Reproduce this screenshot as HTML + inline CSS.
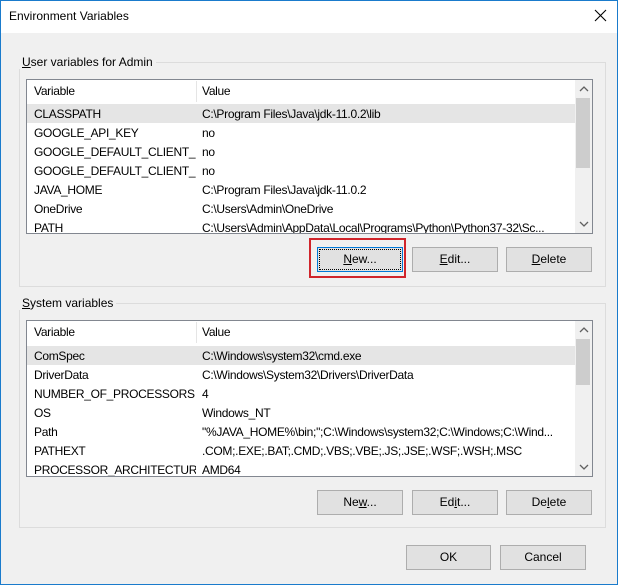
<!DOCTYPE html>
<html><head><style>
*{margin:0;padding:0;box-sizing:border-box}
body{width:618px;height:585px;overflow:hidden;background:#f0f0f0;font-family:"Liberation Sans",sans-serif;font-size:12px;color:#000;position:relative}
.a{position:absolute}
.win{left:0;top:0;width:618px;height:585px;border:1px solid #1a7bcc}
.title{left:1px;top:1px;width:616px;height:32px;background:#fff}
.grp{border:1px solid #dcdcdc}
.lbl{background:#f0f0f0;padding:0 3px}
.lv{background:#fff;border:1px solid #828790;overflow:hidden;letter-spacing:-0.3px}
.row{position:absolute;left:0;width:548px;height:19px;line-height:19px}
.row span{position:absolute;top:0;white-space:nowrap}
.c1{left:7px;width:162px;overflow:hidden}.c2{left:175px}
.sel{background:#e5e5e5}
.sb{background:#f0f0f0}
.btn{background:#e1e1e1;border:1px solid #adadad;text-align:center;line-height:22px}
u{text-decoration:underline}
.ar{font-size:13px;color:#606060;font-weight:bold}
</style></head><body>
<div class="a win"></div>
<div class="a title"></div>
<div class="a" style="left:9px;top:9px;font-size:12px">Environment Variables</div>
<svg class="a" style="left:594px;top:9px" width="13" height="13"><path d="M1 1L12 12M12 1L1 12" stroke="#000" stroke-width="1.1"/></svg>

<div class="a grp" style="left:19px;top:62px;width:587px;height:225px"></div>
<div class="a lbl" style="left:19px;top:55px"><u>U</u>ser variables for Admin</div>
<div class="a lv" style="left:26px;top:79px;width:567px;height:155px">
  <div class="row" style="top:1px;height:21px;line-height:21px"><span class="c1">Variable</span><span class="c2">Value</span></div>
  <div class="a" style="left:169px;top:1px;width:1px;height:21px;background:#e5e5e5"></div>
  <div class="row sel" style="top:24px;line-height:21px"><span class="c1">CLASSPATH</span><span class="c2">C:\Program Files\Java\jdk-11.0.2\lib</span></div>
  <div class="row" style="top:44px"><span class="c1">GOOGLE_API_KEY</span><span class="c2">no</span></div>
  <div class="row" style="top:63px"><span class="c1">GOOGLE_DEFAULT_CLIENT_ID</span><span class="c2">no</span></div>
  <div class="row" style="top:82px"><span class="c1">GOOGLE_DEFAULT_CLIENT_...</span><span class="c2">no</span></div>
  <div class="row" style="top:101px"><span class="c1">JAVA_HOME</span><span class="c2">C:\Program Files\Java\jdk-11.0.2</span></div>
  <div class="row" style="top:120px"><span class="c1">OneDrive</span><span class="c2">C:\Users\Admin\OneDrive</span></div>
  <div class="row" style="top:139px"><span class="c1">PATH</span><span class="c2">C:\Users\Admin\AppData\Local\Programs\Python\Python37-32\Sc...</span></div>
  <div class="a sb" style="left:548px;top:0;width:17px;height:153px"></div>
  <div class="a" style="left:549px;top:18px;width:14px;height:70px;background:#cdcdcd"></div>
  <svg class="a" style="left:552px;top:5px" width="10" height="8"><path d="M1 6L5 2L9 6" fill="none" stroke="#606060" stroke-width="1.3"/></svg>
  <svg class="a" style="left:552px;top:140px" width="10" height="8"><path d="M1 2L5 6L9 2" fill="none" stroke="#606060" stroke-width="1.3"/></svg>
</div>
<div class="a" style="left:309px;top:238px;width:97px;height:40px;border:2px solid #d0252b"></div>
<div class="a btn" style="left:317px;top:247px;width:86px;height:25px;border:1px solid #0078d7;outline:1px dotted #000;outline-offset:-3px"><u>N</u>ew...</div>
<div class="a btn" style="left:412px;top:247px;width:86px;height:25px"><u>E</u>dit...</div>
<div class="a btn" style="left:506px;top:247px;width:86px;height:25px"><u>D</u>elete</div>

<div class="a grp" style="left:19px;top:303px;width:587px;height:225px"></div>
<div class="a lbl" style="left:19px;top:296px"><u>S</u>ystem variables</div>
<div class="a lv" style="left:26px;top:320px;width:567px;height:157px">
  <div class="row" style="top:1px;height:21px;line-height:21px"><span class="c1">Variable</span><span class="c2">Value</span></div>
  <div class="a" style="left:169px;top:1px;width:1px;height:21px;background:#e5e5e5"></div>
  <div class="row sel" style="top:25px;line-height:20px"><span class="c1">ComSpec</span><span class="c2">C:\Windows\system32\cmd.exe</span></div>
  <div class="row" style="top:45px"><span class="c1">DriverData</span><span class="c2">C:\Windows\System32\Drivers\DriverData</span></div>
  <div class="row" style="top:64px"><span class="c1">NUMBER_OF_PROCESSORS</span><span class="c2">4</span></div>
  <div class="row" style="top:83px"><span class="c1">OS</span><span class="c2">Windows_NT</span></div>
  <div class="row" style="top:102px"><span class="c1">Path</span><span class="c2">"%JAVA_HOME%\bin;";C:\Windows\system32;C:\Windows;C:\Wind...</span></div>
  <div class="row" style="top:121px"><span class="c1">PATHEXT</span><span class="c2">.COM;.EXE;.BAT;.CMD;.VBS;.VBE;.JS;.JSE;.WSF;.WSH;.MSC</span></div>
  <div class="row" style="top:140px"><span class="c1">PROCESSOR_ARCHITECTURE</span><span class="c2">AMD64</span></div>
  <div class="a sb" style="left:548px;top:0;width:17px;height:155px"></div>
  <div class="a" style="left:549px;top:18px;width:14px;height:46px;background:#cdcdcd"></div>
  <svg class="a" style="left:552px;top:5px" width="10" height="8"><path d="M1 6L5 2L9 6" fill="none" stroke="#606060" stroke-width="1.3"/></svg>
  <svg class="a" style="left:552px;top:142px" width="10" height="8"><path d="M1 2L5 6L9 2" fill="none" stroke="#606060" stroke-width="1.3"/></svg>
</div>
<div class="a btn" style="left:317px;top:490px;width:86px;height:25px">Ne<u>w</u>...</div>
<div class="a btn" style="left:412px;top:490px;width:86px;height:25px">Ed<u>i</u>t...</div>
<div class="a btn" style="left:506px;top:490px;width:86px;height:25px">De<u>l</u>ete</div>

<div class="a btn" style="left:406px;top:545px;width:85px;height:25px">OK</div>
<div class="a btn" style="left:500px;top:545px;width:86px;height:25px">Cancel</div>
</body></html>
